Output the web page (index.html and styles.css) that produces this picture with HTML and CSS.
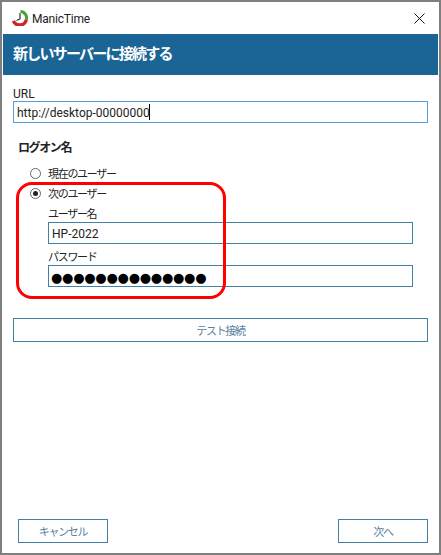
FILE: index.html
```html
<!DOCTYPE html>
<html lang="ja">
<head>
    <meta charset="UTF-8">
    <meta name="viewport" content="width=device-width, initial-scale=1.0">
    <title>ManicTime</title>
    <link rel="stylesheet" href="styles.css">
</head>
<body>

    <div class="window">
        <div class="titlebar">
            <svg class="app-icon" width="16" height="16" viewBox="0 0 16 16">
                <path d="M8.5 1.4 A6.4 6.4 0 0 1 14.3 9.5" fill="none" stroke="#3fa535" stroke-width="3"/>
                <path d="M14.3 9.5 A6.8 6.8 0 0 1 1.4 11" fill="none" stroke="#d2232a" stroke-width="3.4"/>
                <path d="M8 3 V9 L4.5 10.5" fill="none" stroke="#222" stroke-width="1.1"/>
            </svg>
            <span class="app-name">ManicTime</span>
            <svg class="close-icon" width="11" height="11" viewBox="0 0 11 11">
                <path d="M0.5 0.5 L10.5 10.5 M10.5 0.5 L0.5 10.5" stroke="#111" stroke-width="1"/>
            </svg>
        </div>

        <h1 class="banner">新しいサーバーに接続する</h1>

        <div class="content">
            <label class="url-label">URL</label>
            <div class="input input-focus">http://desktop-00000000<span class="caret"></span></div>

            <h2 class="logon-title">ログオン名</h2>

            <div class="logon-group">
                <div class="radio-row">
                    <span class="radio"></span>
                    <span class="ja">現在のユーザー</span>
                </div>
                <div class="radio-row">
                    <span class="radio radio-checked"></span>
                    <span class="ja">次のユーザー</span>
                </div>
                <div class="credentials">
                    <label class="field-label ja">ユーザー名</label>
                    <div class="input">HP-2022</div>
                    <label class="field-label field-label-second ja">パスワード</label>
                    <div class="input input-password">●●●●●●●●●●●●●●</div>
                </div>
                <div class="highlight"></div>
            </div>

            <button class="btn btn-wide ja">テスト接続</button>
        </div>

        <div class="footer">
            <button class="btn btn-footer ja">キャンセル</button>
            <button class="btn btn-footer ja">次へ</button>
        </div>
    </div>

</body>
</html>
```

FILE: styles.css
```css
/* General Styles */
* {
    box-sizing: border-box;
}

html, body {
    height: 100%;
}

body {
    margin: 0;
    font-family: Roboto, "Noto Sans CJK JP", sans-serif;
    font-size: 12px;
    color: #222;
    background: #fff;
}

.window {
    display: flex;
    flex-direction: column;
    width: 441px;
    height: 555px;
    border: 2px solid #7f7f7f;
    background: #fff;
    overflow: hidden;
}

/* Title bar */
.titlebar {
    display: flex;
    align-items: center;
    height: 32px;
    padding: 0 14px 0 10px;
}

.app-name {
    margin-left: 4px;
    padding-top: 1px;
    font-size: 12px;
    letter-spacing: -0.2px;
}

.close-icon {
    margin-left: auto;
}

.banner {
    margin: 0 0 0 1px;
    width: 435px;
    height: 41px;
    padding-left: 10px;
    background: #1a6595;
    color: #fff;
    font-size: 15px;
    font-weight: 700;
    letter-spacing: -1.75px;
    line-height: 41px;
}

/* Form */
.content {
    padding: 11px 11px 0;
}

.url-label {
    display: block;
    height: 15px;
    line-height: 17px;
}

.input {
    height: 22px;
    border: 1px solid #447fa6;
    padding: 1px 0 0 3px;
    line-height: 21px;
    color: #222;
}

.input-focus {
    border-color: #5b9bd9;
}

.caret {
    display: inline-block;
    width: 1px;
    height: 16px;
    margin-left: -1px;
    background: #000;
    vertical-align: -3px;
}

.logon-title {
    margin: 16px 0 0 5px;
    font-size: 12px;
    font-weight: 700;
    letter-spacing: -1.4px;
    line-height: 18px;
}

.logon-group {
    position: relative;
    margin-top: 6px;
}

.radio-row {
    display: flex;
    align-items: center;
    gap: 7px;
    height: 20px;
    padding-left: 17px;
}

.radio {
    width: 11px;
    height: 11px;
    border: 1px solid #666;
    border-radius: 50%;
    background: #fff;
}

.radio-checked {
    padding: 2px;
    background: #222;
    background-clip: content-box;
}

.credentials {
    padding: 3px 0 0 35px;
    width: 400px;
}

.field-label {
    display: block;
    height: 16px;
    line-height: 18px;
}

.field-label-second {
    margin-top: 5px;
}

.input-password {
    padding-left: 2px;
    font-family: "DejaVu Sans", sans-serif;
    font-size: 13px;
    letter-spacing: -0.25px;
    color: #000;
}

/* red annotation drawn over the group */
.highlight {
    position: absolute;
    left: 3px;
    top: 19px;
    width: 210px;
    height: 117px;
    border: 3px solid #f00;
    border-radius: 16px;
    pointer-events: none;
}

/* Buttons */
.btn {
    height: 24px;
    border: 1px solid #447fa6;
    background: #fff;
    color: #5a7f9e;
    font-family: inherit;
    padding: 0;
}

.btn-wide {
    display: block;
    width: 415px;
    margin-top: 31px;
}

.footer {
    display: flex;
    justify-content: space-between;
    margin-top: auto;
    padding: 0 11px 10px 16px;
}

.btn-footer {
    width: 90px;
}

/* Meiryo UI style kana are much narrower than the CJK font */
.ja {
    font-size: 11px;
    letter-spacing: -1.3px;
}
```
